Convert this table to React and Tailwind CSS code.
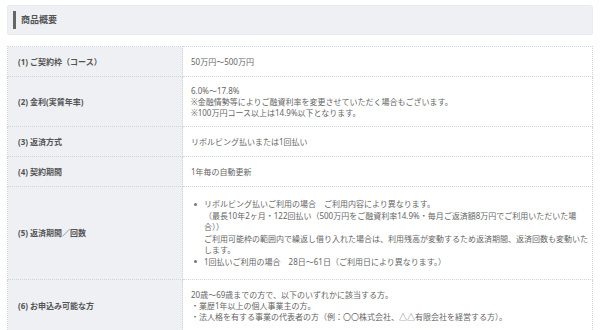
import React from 'react';

const rows = [
  { label: '(1) ご契約枠（コース）', lines: ['50万円～500万円'] },
  {
    label: '(2) 金利(実質年率)',
    lines: [
      '6.0%～17.8%',
      '※金融情勢等によりご融資利率を変更させていただく場合もございます。',
      '※100万円コース以上は14.9%以下となります。',
    ],
  },
  { label: '(3) 返済方式', lines: ['リボルビング払いまたは1回払い'] },
  { label: '(4) 契約期間', lines: ['1年毎の自動更新'] },
  { label: '(5) 返済期間／回数', bullets: true },
  {
    label: '(6) お申込み可能な方',
    pad: 'py-[9px]',
    lines: [
      '20歳～69歳までの方で、以下のいずれかに該当する方。',
      '・業歴1年以上の個人事業主の方。',
      '・法人格を有する事業の代表者の方（例：〇〇株式会社、△△有限会社を経営する方）。',
    ],
  },
  { label: '', lines: [''] },
];

function Dot() {
  return (
    <span className="w-[10px] shrink-0 pt-[4.5px]">
      <span className="block w-[3px] h-[3px] rounded-full bg-[#777]" />
    </span>
  );
}

function Bullets() {
  return (
    <ul className="my-[3px] pl-[3px] leading-[11.6px]">
      <li className="flex">
        <Dot />
        <span>
          リボルビング払いご利用の場合　ご利用内容により異なります。
          <br />
          （最長10年2ヶ月・122回払い（500万円をご融資利率14.9%・毎月ご返済額8万円でご利用いただいた場合））
          <br />
          ご利用可能枠の範囲内で繰返し借り入れた場合は、利用残高が変動するため返済期間、返済回数も変動いたします。
        </span>
      </li>
      <li className="flex">
        <Dot />
        <span>1回払いご利用の場合　28日～61日（ご利用日により異なります。）</span>
      </li>
    </ul>
  );
}

export default function App() {
  return (
    <div className="w-[600px] h-[330px] overflow-hidden bg-white pt-[5px] px-[7px] text-[#666] font-['Noto_Sans','Noto_Sans_CJK_JP',sans-serif]">
      <div className="h-[30px] flex items-center gap-[5px] px-[5px] bg-[#eef0f4] rounded-[3px] border border-dotted border-[#e2e5ea]">
        <span className="w-[3px] h-[18px] bg-[#666]" />
        <h2 className="text-[9px] font-bold text-[#555]">商品概要</h2>
      </div>

      <table className="mt-[11px] w-full border-collapse text-[8px] leading-[11px]">
        <tbody>
          {rows.map((r, i) => (
            <tr key={i}>
              <th className="w-[175px] bg-[#eef0f4] border border-dotted border-[#cfd3da] pl-[10px] pr-2 py-[9px] text-left font-bold text-[#555]">
                {r.label}
              </th>
              <td className={`border border-dotted border-[#cfd3da] pl-[8px] pr-[4px] ${r.pad || 'py-[8px]'}`}>
                {r.bullets ? (
                  <Bullets />
                ) : (
                  r.lines.map((l, j) => <div key={j}>{l}</div>)
                )}
              </td>
            </tr>
          ))}
        </tbody>
      </table>
    </div>
  );
}
